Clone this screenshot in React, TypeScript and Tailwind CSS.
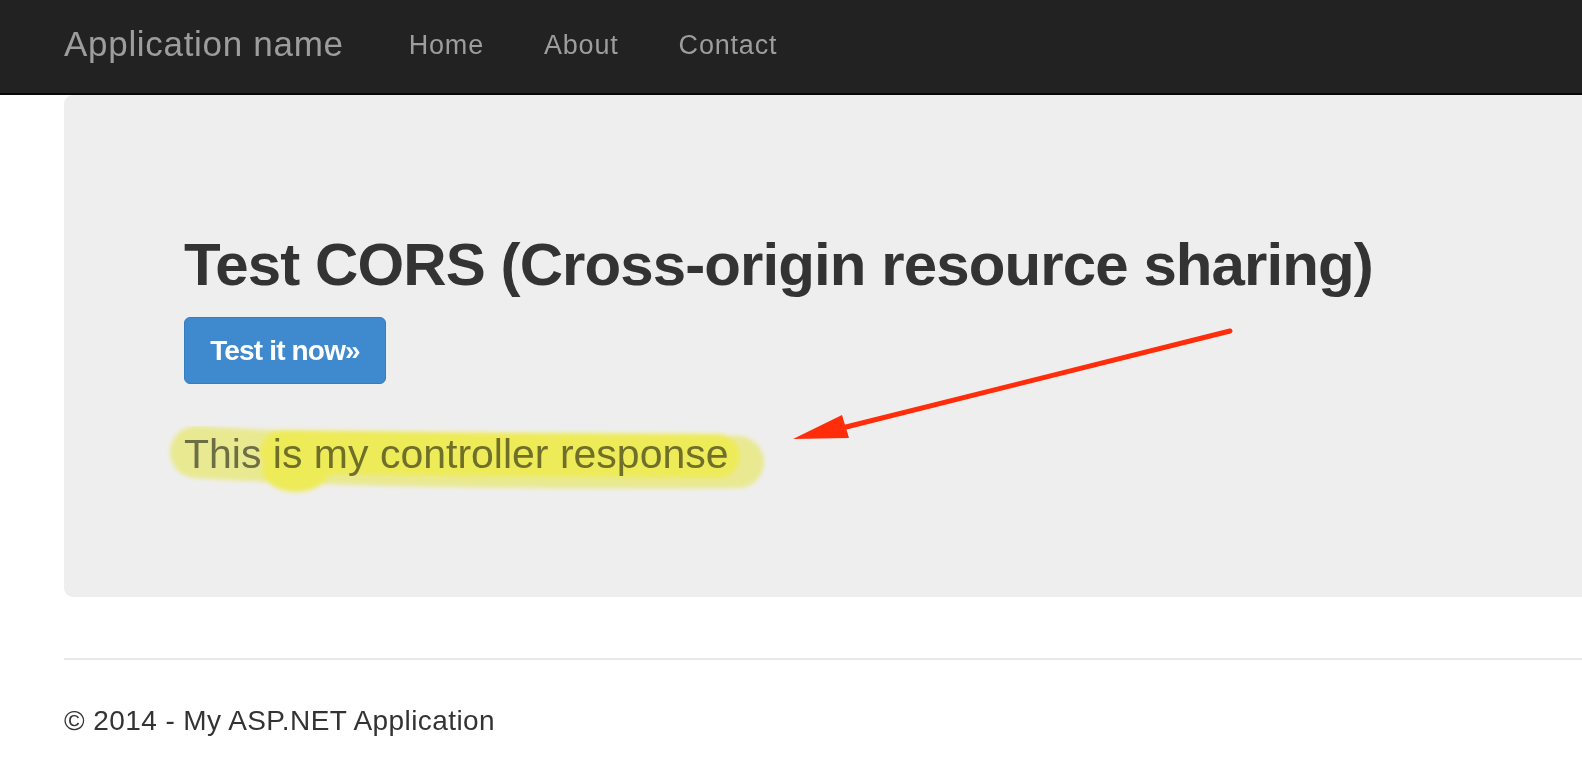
import React from "react";

export default function App() {
  return (
    <div
      className="relative w-[1582px] h-[770px] overflow-hidden bg-white text-[#333333]"
      style={{ fontFamily: '"Liberation Sans", Arial, sans-serif' }}
    >
      {/* Navbar */}
      <nav className="flex items-center h-[95px] bg-[#222222] border-b-2 border-[#080808] pl-[64px] pb-[6px]">
        <span className="text-[35px] leading-none tracking-[0.02em] text-[#9d9d9d]">Application name</span>
        <div className="flex items-center ml-[65px] gap-[60px] pt-[4px] text-[27px] leading-none tracking-[0.03em] text-[#9d9d9d]">
          <span>Home</span>
          <span>About</span>
          <span>Contact</span>
        </div>
      </nav>

      {/* Jumbotron */}
      <div className="ml-[64px] bg-[#eeeeee] rounded-l-[9px] pl-[120px] pt-[140px] pb-[122px] flex flex-col items-start">
        <h1 className="text-[60px] leading-none font-bold tracking-[-0.015em] text-[#333333]">
          Test CORS (Cross-origin resource sharing)
        </h1>
        <button className="mt-[22px] flex items-center justify-center w-[202px] h-[67px] rounded-[6px] bg-[#3f89cf] border border-[#357ebd] text-white text-[28px] leading-none font-bold tracking-[-0.03em]">
          Test it now»
        </button>
        <p className="mt-[50px] text-[41px] leading-none text-[#707070]">This is my controller response</p>
      </div>

      {/* Footer */}
      <div className="ml-[64px] mt-[61px] h-[2px] bg-[#e8e8e8]" />
      <footer className="ml-[64px] mt-[47px] text-[28px] leading-none tracking-[0.015em] text-[#333333]">
        © 2014 - My ASP.NET Application
      </footer>

      {/* Highlighter annotation */}
      <svg
        className="absolute left-0 top-0 pointer-events-none mix-blend-multiply"
        width="1582"
        height="770"
        viewBox="0 0 1582 770"
      >
        <defs>
          <filter id="soft" x="-10%" y="-50%" width="120%" height="200%">
            <feGaussianBlur stdDeviation="2" />
          </filter>
        </defs>
        <g filter="url(#soft)">
          <path
            d="M 196 452 C 320 460, 520 464, 738 462"
            stroke="#fafa9c"
            strokeWidth="52"
            strokeLinecap="round"
            fill="none"
          />
          <path
            d="M 282 452 C 420 454, 600 456, 718 456"
            stroke="#fffc5e"
            strokeWidth="44"
            strokeLinecap="round"
            fill="none"
          />
          <ellipse cx="296" cy="470" rx="34" ry="22" fill="#fffc5e" />
        </g>
      </svg>

      {/* Red arrow annotation */}
      <svg
        className="absolute left-0 top-0 pointer-events-none"
        width="1582"
        height="770"
        viewBox="0 0 1582 770"
      >
        <line x1="1230" y1="331" x2="842" y2="428" stroke="#ff2d0a" strokeWidth="5" strokeLinecap="round" />
        <polygon points="793,439 842,415 849,438" fill="#ff2d0a" />
      </svg>
    </div>
  );
}
